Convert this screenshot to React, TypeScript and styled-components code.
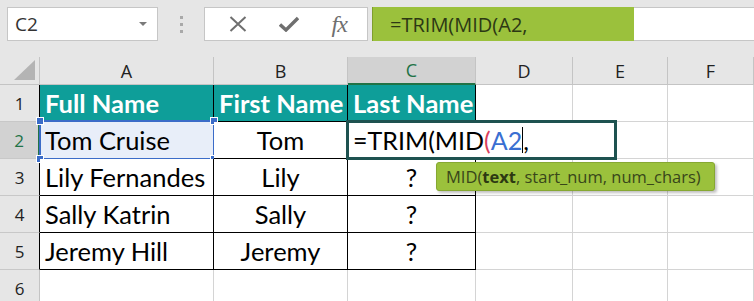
import styled, { createGlobalStyle } from 'styled-components';

const GlobalStyle = createGlobalStyle`
  html, body {
    margin: 0;
    padding: 0;
    background: #ffffff;
  }
`;

const Window = styled.div`
  width: 754px;
  height: 301px;
  overflow: hidden;
  background: #ffffff;
  font-family: 'Open Sans', 'Noto Sans', sans-serif;
`;

const TopBar = styled.div`
  display: flex;
  align-items: flex-start;
  height: 57px;
  box-sizing: border-box;
  padding: 7px 0 0 7px;
  background: #e6e6e6;
`;

const NameBox = styled.div`
  display: flex;
  align-items: center;
  justify-content: space-between;
  width: 151px;
  height: 34px;
  box-sizing: border-box;
  padding: 0 10px 0 7px;
  background: #ffffff;
  border: 1px solid #c6c6c6;
  font-size: 19px;
  color: #333333;
`;

const DropArrow = styled.span`
  width: 0;
  height: 0;
  border-left: 4px solid transparent;
  border-right: 4px solid transparent;
  border-top: 4px solid #7a7a7a;
`;

const Grip = styled.div`
  display: flex;
  flex-direction: column;
  align-items: center;
  justify-content: center;
  gap: 4px;
  width: 46px;
  height: 34px;

  span {
    width: 3px;
    height: 3px;
    background: #a9a9a9;
  }
`;

const FxBox = styled.div`
  display: flex;
  align-items: center;
  justify-content: space-around;
  width: 164px;
  height: 34px;
  box-sizing: border-box;
  padding: 0 4px 0 8px;
  background: #ffffff;
  border: 1px solid #c6c6c6;
  color: #6f6f6f;
`;

const FxGlyph = styled.span`
  font-family: 'Liberation Serif', serif;
  font-style: italic;
  font-size: 24px;
  color: #6f6f6f;
  letter-spacing: -1px;
`;

const FormulaInput = styled.div`
  flex: 1;
  display: flex;
  height: 34px;
  margin-left: 4px;
  box-sizing: border-box;
  background: #ffffff;
  border-top: 1px solid #c6c6c6;
  border-bottom: 1px solid #c6c6c6;
`;

const FormulaHighlight = styled.div`
  display: flex;
  align-items: center;
  width: 262px;
  box-sizing: border-box;
  padding-left: 17px;
  margin: -1px 0;
  background: #9bc13c;
  border-left: 1px solid #7f9f2c;
  font-size: 20px;
  color: #2c3814;
`;

const Sheet = styled.div`
  display: grid;
  grid-template-columns: 40px 174px 134px 128px 97px 95px 1fr;
  grid-template-rows: 28px repeat(6, 37px);
`;

const Corner = styled.div`
  position: relative;
  background: #e6e6e6;
  border-right: 1px solid #c4c4c4;
  border-bottom: 1px solid #c4c4c4;

  &::after {
    content: '';
    position: absolute;
    right: 4px;
    bottom: 4px;
    width: 0;
    height: 0;
    border-left: 21px solid transparent;
    border-bottom: 20px solid #b4b4b4;
  }
`;

const ColHead = styled.div<{ $active?: boolean }>`
  display: flex;
  align-items: center;
  justify-content: center;
  background: ${p => (p.$active ? '#d2d2d2' : '#e6e6e6')};
  border-right: 1px solid #c4c4c4;
  border-bottom: ${p => (p.$active ? '2px solid #217346' : '1px solid #c4c4c4')};
  font-size: 18px;
  color: ${p => (p.$active ? '#217346' : '#222222')};
`;

const RowHead = styled.div<{ $active?: boolean; $edge?: string }>`
  display: flex;
  align-items: center;
  justify-content: center;
  box-sizing: border-box;
  background: ${p => (p.$active ? '#d2d2d2' : '#e6e6e6')};
  border-right: ${p => (p.$active ? '2px solid #217346' : `1px solid ${p.$edge ?? '#c4c4c4'}`)};
  border-bottom: 1px solid #c8c8c8;
  font-size: 17px;
  color: ${p => (p.$active ? '#217346' : '#222222')};
`;

const Cell = styled.div<{
  $fill?: string;
  $edge?: string;
  $center?: boolean;
  $bold?: boolean;
}>`
  position: relative;
  display: flex;
  align-items: center;
  justify-content: ${p => (p.$center ? 'center' : 'flex-start')};
  padding: 0 ${p => (p.$center ? '0' : '5px')};
  overflow: visible;
  white-space: nowrap;
  background: ${p => p.$fill ?? '#ffffff'};
  border-right: 1px solid ${p => p.$edge ?? '#d4d4d4'};
  border-bottom: 1px solid ${p => p.$edge ?? '#d4d4d4'};
  font-family: Lato, 'Liberation Sans', sans-serif;
  font-size: 25.5px;
  font-weight: ${p => (p.$bold ? 700 : 400)};
  color: ${p => (p.$bold ? '#ffffff' : '#000000')};
`;

const Selection = styled.div`
  position: absolute;
  left: -1px;
  top: -2px;
  right: -2px;
  bottom: -2px;
  border: 2px solid #3b6cc8;
  pointer-events: none;
`;

const Handle = styled.span<{ $x: 'left' | 'right'; $y: 'top' | 'bottom' }>`
  position: absolute;
  ${p => p.$x}: -5px;
  ${p => p.$y}: -5px;
  width: 6px;
  height: 6px;
  background: #3b6cc8;
  border: 1px solid #ffffff;
`;

const EditBox = styled.div`
  position: absolute;
  left: -2px;
  top: -2px;
  z-index: 2;
  display: flex;
  align-items: center;
  width: 271px;
  height: 40px;
  box-sizing: border-box;
  padding-left: 4px;
  background: #ffffff;
  border: 3px solid #1e5250;
  font-size: 25px;
  color: #000000;
`;

const Paren = styled.span`
  color: #d9405c;
`;

const Ref = styled.span`
  color: #3a6fd2;
`;

const Caret = styled.span`
  display: inline-block;
  width: 1px;
  height: 26px;
  background: #000000;
  vertical-align: middle;
`;

const Tip = styled.div`
  position: absolute;
  left: 88px;
  top: 40px;
  z-index: 3;
  display: flex;
  align-items: center;
  width: 279px;
  height: 29px;
  box-sizing: border-box;
  padding-left: 9px;
  background: #9bc13c;
  border: 1px solid #86a832;
  border-radius: 3px;
  box-shadow: 2px 2px 3px rgba(0, 0, 0, 0.25);
  font-family: 'Open Sans', 'Noto Sans', sans-serif;
  font-size: 16.5px;
  white-space: nowrap;
  color: #38461a;

  b {
    font-weight: 700;
    color: #2d3912;
  }
`;

const CrossIcon = () => (
  <svg width="18" height="16" viewBox="0 0 18 16">
    <path d="M1.5 1 L16.5 15 M16.5 1 L1.5 15" stroke="#6f6f6f" strokeWidth="2" fill="none" />
  </svg>
);

const CheckIcon = () => (
  <svg width="20" height="16" viewBox="0 0 20 16">
    <path d="M1 8.5 L7 14 L19 2" stroke="#6f6f6f" strokeWidth="3.4" fill="none" strokeLinejoin="miter" />
  </svg>
);

const TABLE = '#000000';

const rows = [
  ['Full Name', 'First Name', 'Last Name'],
  ['Tom Cruise', 'Tom', ''],
  ['Lily Fernandes', 'Lily', '?'],
  ['Sally Katrin', 'Sally', '?'],
  ['Jeremy Hill', 'Jeremy', '?'],
];

const letters = ['A', 'B', 'C', 'D', 'E', 'F'];

const App = () => {
  return (
    <Window>
      <GlobalStyle />
      <TopBar>
        <NameBox>
          C2
          <DropArrow />
        </NameBox>
        <Grip>
          <span />
          <span />
          <span />
        </Grip>
        <FxBox>
          <CrossIcon />
          <CheckIcon />
          <FxGlyph>fx</FxGlyph>
        </FxBox>
        <FormulaInput>
          <FormulaHighlight>=TRIM(MID(A2,</FormulaHighlight>
        </FormulaInput>
      </TopBar>

      <Sheet>
        <Corner />
        {letters.map(l => (
          <ColHead key={l} $active={l === 'C'}>
            {l}
          </ColHead>
        ))}

        {rows.map((row, r) => {
          const head = r === 0;
          return [
            <RowHead key={`h${r}`} $active={r === 1} $edge={TABLE}>
              {r + 1}
            </RowHead>,
            <Cell key={`a${r}`} $edge={TABLE} $fill={head ? '#0e9e99' : r === 1 ? '#e8eef9' : undefined} $bold={head}>
              {row[0]}
              {r === 1 && (
                <Selection>
                  <Handle $x="left" $y="top" />
                  <Handle $x="right" $y="top" />
                  <Handle $x="left" $y="bottom" />
                  <Handle $x="right" $y="bottom" />
                </Selection>
              )}
            </Cell>,
            <Cell key={`b${r}`} $edge={TABLE} $fill={head ? '#0e9e99' : undefined} $bold={head} $center={!head}>
              {row[1]}
            </Cell>,
            <Cell key={`c${r}`} $edge={TABLE} $fill={head ? '#0e9e99' : undefined} $bold={head} $center={!head}>
              {row[2]}
              {r === 1 && (
                <>
                  <EditBox>
                    =TRIM(MID<Paren>(</Paren>
                    <Ref>A2</Ref>
                    <Caret />,
                  </EditBox>
                  <Tip>
                    MID(<b>text</b>, start_num, num_chars)
                  </Tip>
                </>
              )}
            </Cell>,
            <Cell key={`d${r}`} />,
            <Cell key={`e${r}`} />,
            <Cell key={`f${r}`} />,
          ];
        })}

        <RowHead>6</RowHead>
        {letters.map(l => (
          <Cell key={`6${l}`} />
        ))}
      </Sheet>
    </Window>
  );
};

export default App;
